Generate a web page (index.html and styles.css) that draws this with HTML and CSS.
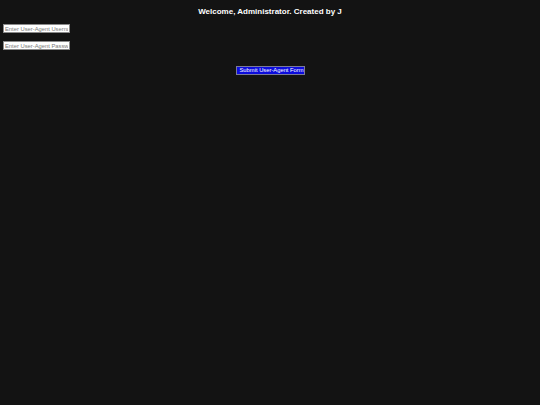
FILE: index.html
```html
<!DOCTYPE html>
<html>
<head>
<meta charset="utf-8">
<link rel="stylesheet" href="styles.css">
</head>
<body>
<h1 class="title">Welcome, Administrator. Created by J</h1>
<form class="form">
  <input class="field" type="text" placeholder="Enter User-Agent Username">
  <input class="field field-second" type="password" placeholder="Enter User-Agent Password">
  <div class="actions">
    <button class="submit" type="button">Submit User-Agent Form</button>
  </div>
</form>
</body>
</html>
```
FILE: styles.css
```css
html, body {
  margin: 0;
  padding: 0;
  background: #131313;
  height: 100%;
}
body {
  font-family: "Liberation Sans", Arial, sans-serif;
  color: #ffffff;
}
.title {
  margin: 7px 0 0;
  font-size: 8px;
  line-height: 10px;
  font-weight: bold;
  text-align: center;
}
.form {
  display: flex;
  flex-direction: column;
  align-items: flex-start;
  padding: 7px 3px 0;
}
.field {
  box-sizing: border-box;
  width: 67px;
  height: 9px;
  margin: 0;
  padding: 0 1px;
  border: 1px solid #8a8a8a;
  background: #ffffff;
  font-family: "Liberation Sans", Arial, sans-serif;
  font-size: 5.8px;
  color: #222;
  outline: none;
}
.field::placeholder {
  color: #7a7a7a;
}
.field-second {
  margin-top: 8px;
}
.actions {
  align-self: stretch;
  display: flex;
  justify-content: center;
  margin-top: 16px;
}
.submit {
  box-sizing: border-box;
  width: 69px;
  height: 9px;
  margin: 0;
  padding: 0 3px;
  border: 1px solid #7a7a9a;
  background: #0c0cdc;
  color: #ffffff;
  font-family: "Liberation Sans", Arial, sans-serif;
  font-size: 5.8px;
  line-height: 7px;
  text-align: left;
  white-space: nowrap;
  overflow: hidden;
}
```
